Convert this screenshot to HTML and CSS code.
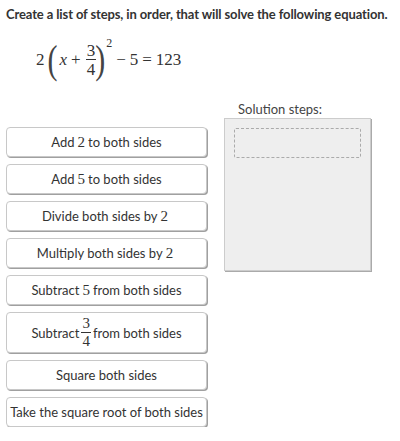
FILE: index.html
```html
<!DOCTYPE html>
<html>
<head>
<meta charset="utf-8">
<link rel="stylesheet" href="styles.css">
</head>
<body>
<div class="page">
  <p class="title">Create a list of steps, in order, that will solve the following equation.</p>
  <div class="equation">
    <span class="num">2</span>
    <span class="paren left">(</span>
    <span class="var">x</span>
    <span class="op">+</span>
    <span class="frac big"><span class="fn">3</span><span class="fd">4</span></span>
    <span class="paren right">)</span>
    <span class="sup">2</span>
    <span class="op minus">−</span>
    <span class="num">5</span>
    <span class="op">=</span>
    <span class="num">123</span>
  </div>
  <div class="workspace">
    <div class="cards">
      <div class="card">Add <span class="m">2</span> to both sides</div>
      <div class="card">Add <span class="m">5</span> to both sides</div>
      <div class="card">Divide both sides by <span class="m">2</span></div>
      <div class="card">Multiply both sides by <span class="m">2</span></div>
      <div class="card">Subtract <span class="m">5</span> from both sides</div>
      <div class="card tall">Subtract <span class="frac small"><span class="fn">3</span><span class="fd">4</span></span> from both sides</div>
      <div class="card">Square both sides</div>
      <div class="card">Take the square root of both sides</div>
    </div>
    <div class="solution">
      <div class="label">Solution steps:</div>
      <div class="dropbox">
        <div class="slot"></div>
      </div>
    </div>
  </div>
</div>
</body>
</html>
```
FILE: styles.css
```css
html, body {
  margin: 0;
  padding: 0;
  background: #fff;
}
.page {
  padding: 6px 6px 0 6px;
  font-family: Lato, "Liberation Sans", sans-serif;
  color: #333;
}
.title {
  margin: 0;
  font-size: 13px;
  font-weight: 700;
  letter-spacing: -0.12px;
  line-height: 16px;
  white-space: nowrap;
  color: #333;
}
.equation {
  display: flex;
  align-items: center;
  height: 44px;
  margin-top: 16px;
  padding-left: 30px;
  font-family: "Liberation Serif", "DejaVu Serif", serif;
  font-size: 17px;
  color: #333;
}
.equation .var { font-style: italic; margin: 0 0 0 2px; }
.equation .op { margin: 0 4px; }
.equation .minus { margin-left: 4px; }
.paren {
  display: inline-block;
  font-size: 30px;
  line-height: 30px;
  transform: scaleY(1.3);
  color: #444;
}
.paren.left { margin-left: 3px; }
.paren.right { margin-left: -1px; }
.sup {
  font-size: 12px;
  align-self: flex-start;
  margin-top: -2px;
  margin-left: 1px;
}
.frac {
  display: inline-flex;
  flex-direction: column;
  align-items: center;
  vertical-align: middle;
  font-family: "Liberation Serif", "DejaVu Serif", serif;
}
.frac .fn {
  border-bottom: 1px solid #333;
}
.frac.big { font-size: 17px; line-height: 15px; margin-left: 1px; }
.frac.big .fn { padding: 0 1px 1px; }
.frac.big .fd { padding-top: 2px; }
.frac.small { font-size: 15px; line-height: 17px; margin: 0 2px; }
.frac.small .fn { padding: 0 1px; }
.workspace {
  display: flex;
  margin-top: 18px;
}
.cards {
  display: flex;
  flex-direction: column;
  gap: 7px;
  width: 201px;
  padding-top: 27px;
}
.card {
  box-sizing: border-box;
  height: 30px;
  border: 1px solid #c8c8c8;
  border-radius: 4px;
  box-shadow: 1px 1px 0 #a0a0a0;
  display: flex;
  align-items: center;
  justify-content: center;
  font-size: 13px;
  color: #333;
  background: #fff;
}
.card.tall { height: 41px; }
.m {
  font-family: "Liberation Serif", "DejaVu Serif", serif;
  font-size: 15px;
  margin: 0 3px;
}
.solution {
  margin-left: 17px;
  width: 147px;
}
.label {
  font-size: 13px;
  color: #444;
  padding-left: 14px;
  height: 18px;
  line-height: 18px;
}
.dropbox {
  box-sizing: border-box;
  height: 153px;
  background: #eee;
  border: 1px solid #ccc;
  box-shadow: 1px 1px 0 #aaa;
  padding: 9px;
}
.slot {
  height: 30px;
  box-sizing: border-box;
  border: 1px dashed #aaa;
  border-radius: 2px;
}
```
